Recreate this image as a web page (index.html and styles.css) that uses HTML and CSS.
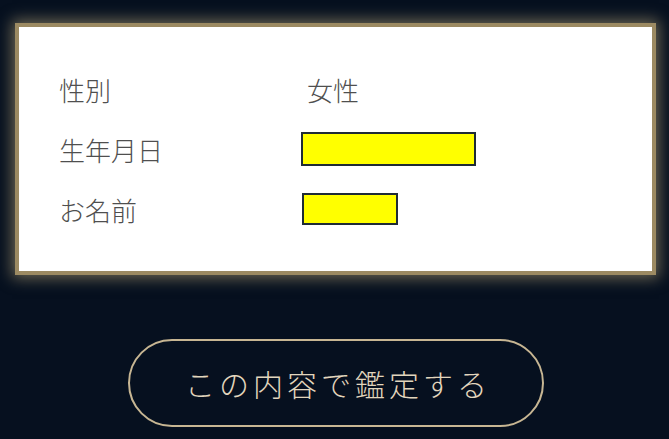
FILE: index.html
```html
<!DOCTYPE html>
<html lang="ja">
<head>
    <meta charset="UTF-8">
    <title>入力内容の確認</title>
    <link rel="stylesheet" href="styles.css">
</head>
<body>
    <div class="confirm">
        <div class="row">
            <div class="label">性別</div>
            <div class="value">女性</div>
        </div>
        <div class="row">
            <div class="label">生年月日</div>
            <div class="value"><span class="mask mask-long"></span></div>
        </div>
        <div class="row">
            <div class="label">お名前</div>
            <div class="value"><span class="mask mask-short"></span></div>
        </div>
    </div>

    <div class="actions">
        <button class="submit">この内容で鑑定する</button>
    </div>
</body>
</html>
```

FILE: styles.css
```css
*{
    padding: 0;
    margin: 0;
    box-sizing: border-box;
}

body{
    background: #06101f;
    font-family: "Noto Sans CJK JP", "Noto Sans", sans-serif;
    height: 439px;
    overflow: hidden;
}

.confirm{
    margin: 23px 13px 0 15px;
    padding: 32px 0 32px 40px;
    background: #fff;
    border: 4px solid #9c8a62;
    box-shadow: 0 0 14px 3px rgba(196, 176, 128, 0.55);
}

.row{
    display: flex;
    align-items: center;
    height: 60px;
    font-size: 26px;
    color: #4f4f4f;
}

.label{
    width: 248px;
    font-weight: 300;
}

.value{
    font-weight: 300;
    display: flex;
    align-items: center;
}

.mask{
    display: block;
    background: #ffff00;
    border: 2px solid #1f2b36;
}

.mask-long{
    width: 175px;
    height: 34px;
    margin-left: -6px;
}

.mask-short{
    width: 96px;
    height: 32px;
    margin-left: -5px;
}

.actions{
    padding: 64px 0 0 128px;
}

.submit{
    width: 416px;
    height: 88px;
    border: 2px solid #c7b693;
    border-radius: 44px;
    background: transparent;
    color: #e2d6bd;
    font-family: "Noto Sans CJK JP", sans-serif;
    font-weight: 300;
    font-size: 30px;
    letter-spacing: 4px;
    padding-left: 4px;
}
```
